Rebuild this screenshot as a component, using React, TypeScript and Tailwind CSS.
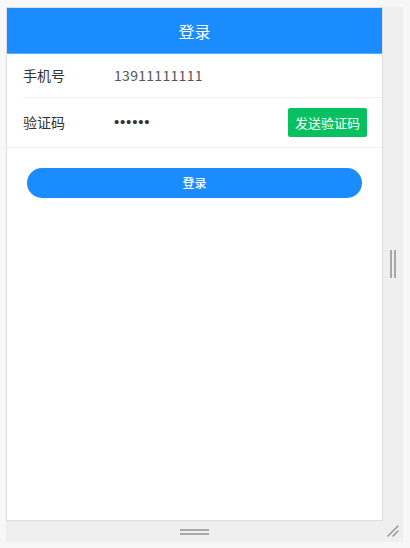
import { useState } from "react";

const font = "font-['Noto_Sans_CJK_SC','Noto_Sans',sans-serif]";

export default function App() {
  const [phone] = useState("13911111111");
  const [code] = useState("123456");

  return (
    <div className={`min-h-[548px] w-[410px] bg-[#f7f7f7] pl-[6px] pt-[7px] ${font}`}>
      <div className="flex w-[397px] flex-col bg-[#efefef]">
        <div className="flex">
          {/* phone screen */}
          <div className="flex h-[514px] w-[377px] flex-col border border-[#dedede] bg-white">
            <header className="flex h-[46px] items-center justify-center border-b border-[#5aabff] bg-[#1b8cfd] text-[16px] text-white">
              登录
            </header>

            <div className="flex h-[43px] items-center pl-[16px]">
              <span className="w-[91px] text-[14px] text-[#333]">手机号</span>
              <span className="text-[14px] tracking-[0.3px] text-[#555]">{phone}</span>
            </div>
            <div className="ml-[16px] h-px bg-[#f0f0f0]" />
            <div className="flex h-[49px] items-center pl-[16px] pr-[15px]">
              <span className="w-[91px] text-[14px] text-[#333]">验证码</span>
              <span className="flex-1 font-['Liberation_Sans',sans-serif] text-[15px] tracking-[0.8px] text-[#333]">
                {"•".repeat(code.length)}
              </span>
              <button className="h-[29px] rounded-[2px] bg-[#07c160] px-[7px] text-[13px] text-white">
                发送验证码
              </button>
            </div>
            <div className="h-px bg-[#f0f0f0]" />

            <div className="px-[20px] pt-[20px]">
              <button className="h-[30px] w-full rounded-full bg-[#1b8cfd] text-[12px] font-medium text-white">
                登录
              </button>
            </div>
          </div>

          {/* right drag strip */}
          <div className="flex w-[20px] items-center justify-center gap-[2px]">
            <span className="h-[28px] w-[2px] bg-[#a8a8a8]" />
            <span className="h-[28px] w-[2px] bg-[#a8a8a8]" />
          </div>
        </div>

        {/* bottom drag strip */}
        <div className="relative flex h-[21px] w-[377px] flex-col items-center justify-center gap-[2px]">
          <span className="h-[2px] w-[29px] bg-[#a8a8a8]" />
          <span className="h-[2px] w-[29px] bg-[#a8a8a8]" />
          <svg
            className="absolute left-[380px] top-[2px]"
            width="14"
            height="14"
            viewBox="0 0 14 14"
          >
            <path d="M2 13 L12 3 M7 13 L12 8" stroke="#999" strokeWidth="1.5" strokeLinecap="round" />
          </svg>
        </div>
      </div>
    </div>
  );
}
